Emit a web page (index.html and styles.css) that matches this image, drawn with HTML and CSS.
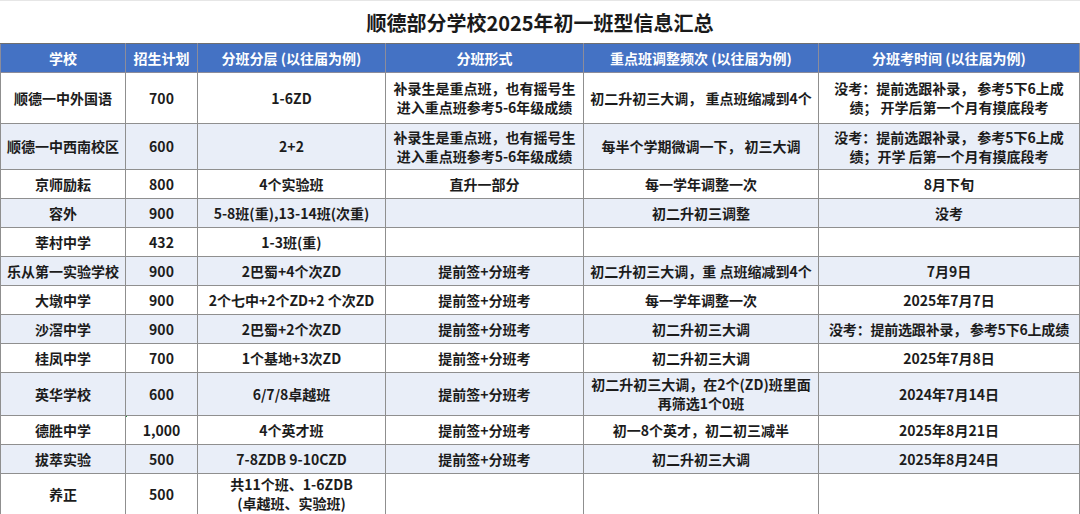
FILE: index.html
```html
<!DOCTYPE html>
<html lang="zh-CN">
<head>
<meta charset="utf-8">
<title>顺德部分学校2025年初一班型信息汇总</title>
<link rel="stylesheet" href="styles.css">
</head>
<body>
<div class="sheet">
  <h1 class="title">顺德部分学校2025年初一班型信息汇总</h1>
  <table class="grid">
    <colgroup>
      <col class="c1"><col class="c2"><col class="c3"><col class="c4"><col class="c5"><col class="c6">
    </colgroup>
    <thead>
      <tr class="head">
        <th>学校</th><th>招生计划</th><th>分班分层 (以往届为例)</th><th>分班形式</th><th>重点班调整频次 (以往届为例)</th><th>分班考时间 (以往届为例)</th>
      </tr>
    </thead>
    <tbody>
      <tr class="r-a">
        <td>顺德一中外国语</td><td>700</td><td>1-6ZD</td>
        <td>补录生是重点班，也有摇号生<br>进入重点班参考5-6年级成绩</td>
        <td>初二升初三大调， 重点班缩减到4个</td>
        <td>没考：提前选跟补录， 参考5下6上成<br>绩； 开学后第一个月有摸底段考</td>
      </tr>
      <tr class="r-b alt">
        <td>顺德一中西南校区</td><td>600</td><td>2+2</td>
        <td>补录生是重点班，也有摇号生<br>进入重点班参考5-6年级成绩</td>
        <td>每半个学期微调一下， 初三大调</td>
        <td>没考：提前选跟补录， 参考5下6上成<br>绩；开学 后第一个月有摸底段考</td>
      </tr>
      <tr class="r-s">
        <td>京师励耘</td><td>800</td><td>4个实验班</td><td>直升一部分</td><td>每一学年调整一次</td><td>8月下旬</td>
      </tr>
      <tr class="r-s alt">
        <td>容外</td><td>900</td><td>5-8班(重),13-14班(次重)</td><td></td><td>初二升初三调整</td><td>没考</td>
      </tr>
      <tr class="r-s">
        <td>莘村中学</td><td>432</td><td>1-3班(重)</td><td></td><td></td><td></td>
      </tr>
      <tr class="r-s alt">
        <td>乐从第一实验学校</td><td>900</td><td>2巴蜀+4个次ZD</td><td>提前签+分班考</td><td>初二升初三大调，重 点班缩减到4个</td><td>7月9日</td>
      </tr>
      <tr class="r-s">
        <td>大墩中学</td><td>900</td><td>2个七中+2个ZD+2 个次ZD</td><td>提前签+分班考</td><td>每一学年调整一次</td><td>2025年7月7日</td>
      </tr>
      <tr class="r-s alt">
        <td>沙滘中学</td><td>900</td><td>2巴蜀+2个次ZD</td><td>提前签+分班考</td><td>初二升初三大调</td><td class="tight">没考：提前选跟补录， 参考5下6上成绩</td>
      </tr>
      <tr class="r-s">
        <td>桂凤中学</td><td>700</td><td>1个基地+3次ZD</td><td>提前签+分班考</td><td>初二升初三大调</td><td>2025年7月8日</td>
      </tr>
      <tr class="r-c alt">
        <td>英华学校</td><td>600</td><td>6/7/8卓越班</td><td>提前签+分班考</td><td>初二升初三大调，在2个(ZD)班里面<br>再筛选1个0班</td><td>2024年7月14日</td>
      </tr>
      <tr class="r-d">
        <td>德胜中学</td><td class="mark">1,000</td><td>4个英才班</td><td>提前签+分班考</td><td>初一8个英才，初二初三减半</td><td>2025年8月21日</td>
      </tr>
      <tr class="r-s alt">
        <td>拔萃实验</td><td>500</td><td>7-8ZDB 9-10CZD</td><td>提前签+分班考</td><td>初二升初三大调</td><td>2025年8月24日</td>
      </tr>
      <tr class="r-e">
        <td>养正</td><td>500</td><td>共11个班、1-6ZDB<br>(卓越班、实验班)</td><td></td><td></td><td></td>
      </tr>
    </tbody>
  </table>
</div>
</body>
</html>
```

FILE: styles.css
```css
html, body {
  margin: 0;
  padding: 0;
  background: #ffffff;
}

body {
  font-family: "Noto Sans CJK SC", "Noto Sans", sans-serif;
  color: #1c1c1c;
  width: 1080px;
  height: 514px;
  overflow: hidden;
}

.sheet {
  width: 1080px;
  border-top: 1px solid #e6e6e6;
}

.title {
  margin: 0;
  height: 42px;
  display: flex;
  align-items: center;
  justify-content: center;
  font-size: 20px;
  font-weight: 700;
  color: #1a1a1a;
  letter-spacing: 0;
}

.grid {
  width: 1079px;
  table-layout: fixed;
  border-collapse: collapse;
  font-size: 14px;
  font-weight: 700;
}

.c1 { width: 125px; }
.c2 { width: 72px; }
.c3 { width: 188px; }
.c4 { width: 198px; }
.c5 { width: 235px; }
.c6 { width: 261px; }

.grid th,
.grid td {
  border: 1px solid #8f8f8f;
  text-align: center;
  vertical-align: middle;
  padding: 0 2px;
  line-height: 19px;
  white-space: nowrap;
  overflow: hidden;
}

.grid th {
  background: #4472c4;
  color: #ffffff;
  height: 28px;
  border-color: #8c8c9a;
  border-top-color: #6f6f6f;
}

.grid td {
  background: #ffffff;
}

.grid tr.alt td {
  background: #e9eef8;
}

.r-a td { height: 50px; }
.r-b td { height: 45px; }
.r-s td { height: 28px; }
.r-c td { height: 42px; }
.r-d td { height: 28px; }
.r-e td { height: 40px; }

.grid td.tight {
  padding: 0;
  letter-spacing: -0.2px;
}

.grid td.mark {
  position: relative;
}

.grid td.mark::before {
  content: "";
  position: absolute;
  left: -1px;
  top: -1px;
  width: 2px;
  height: 2px;
  background: #1e8a3a;
}
```
